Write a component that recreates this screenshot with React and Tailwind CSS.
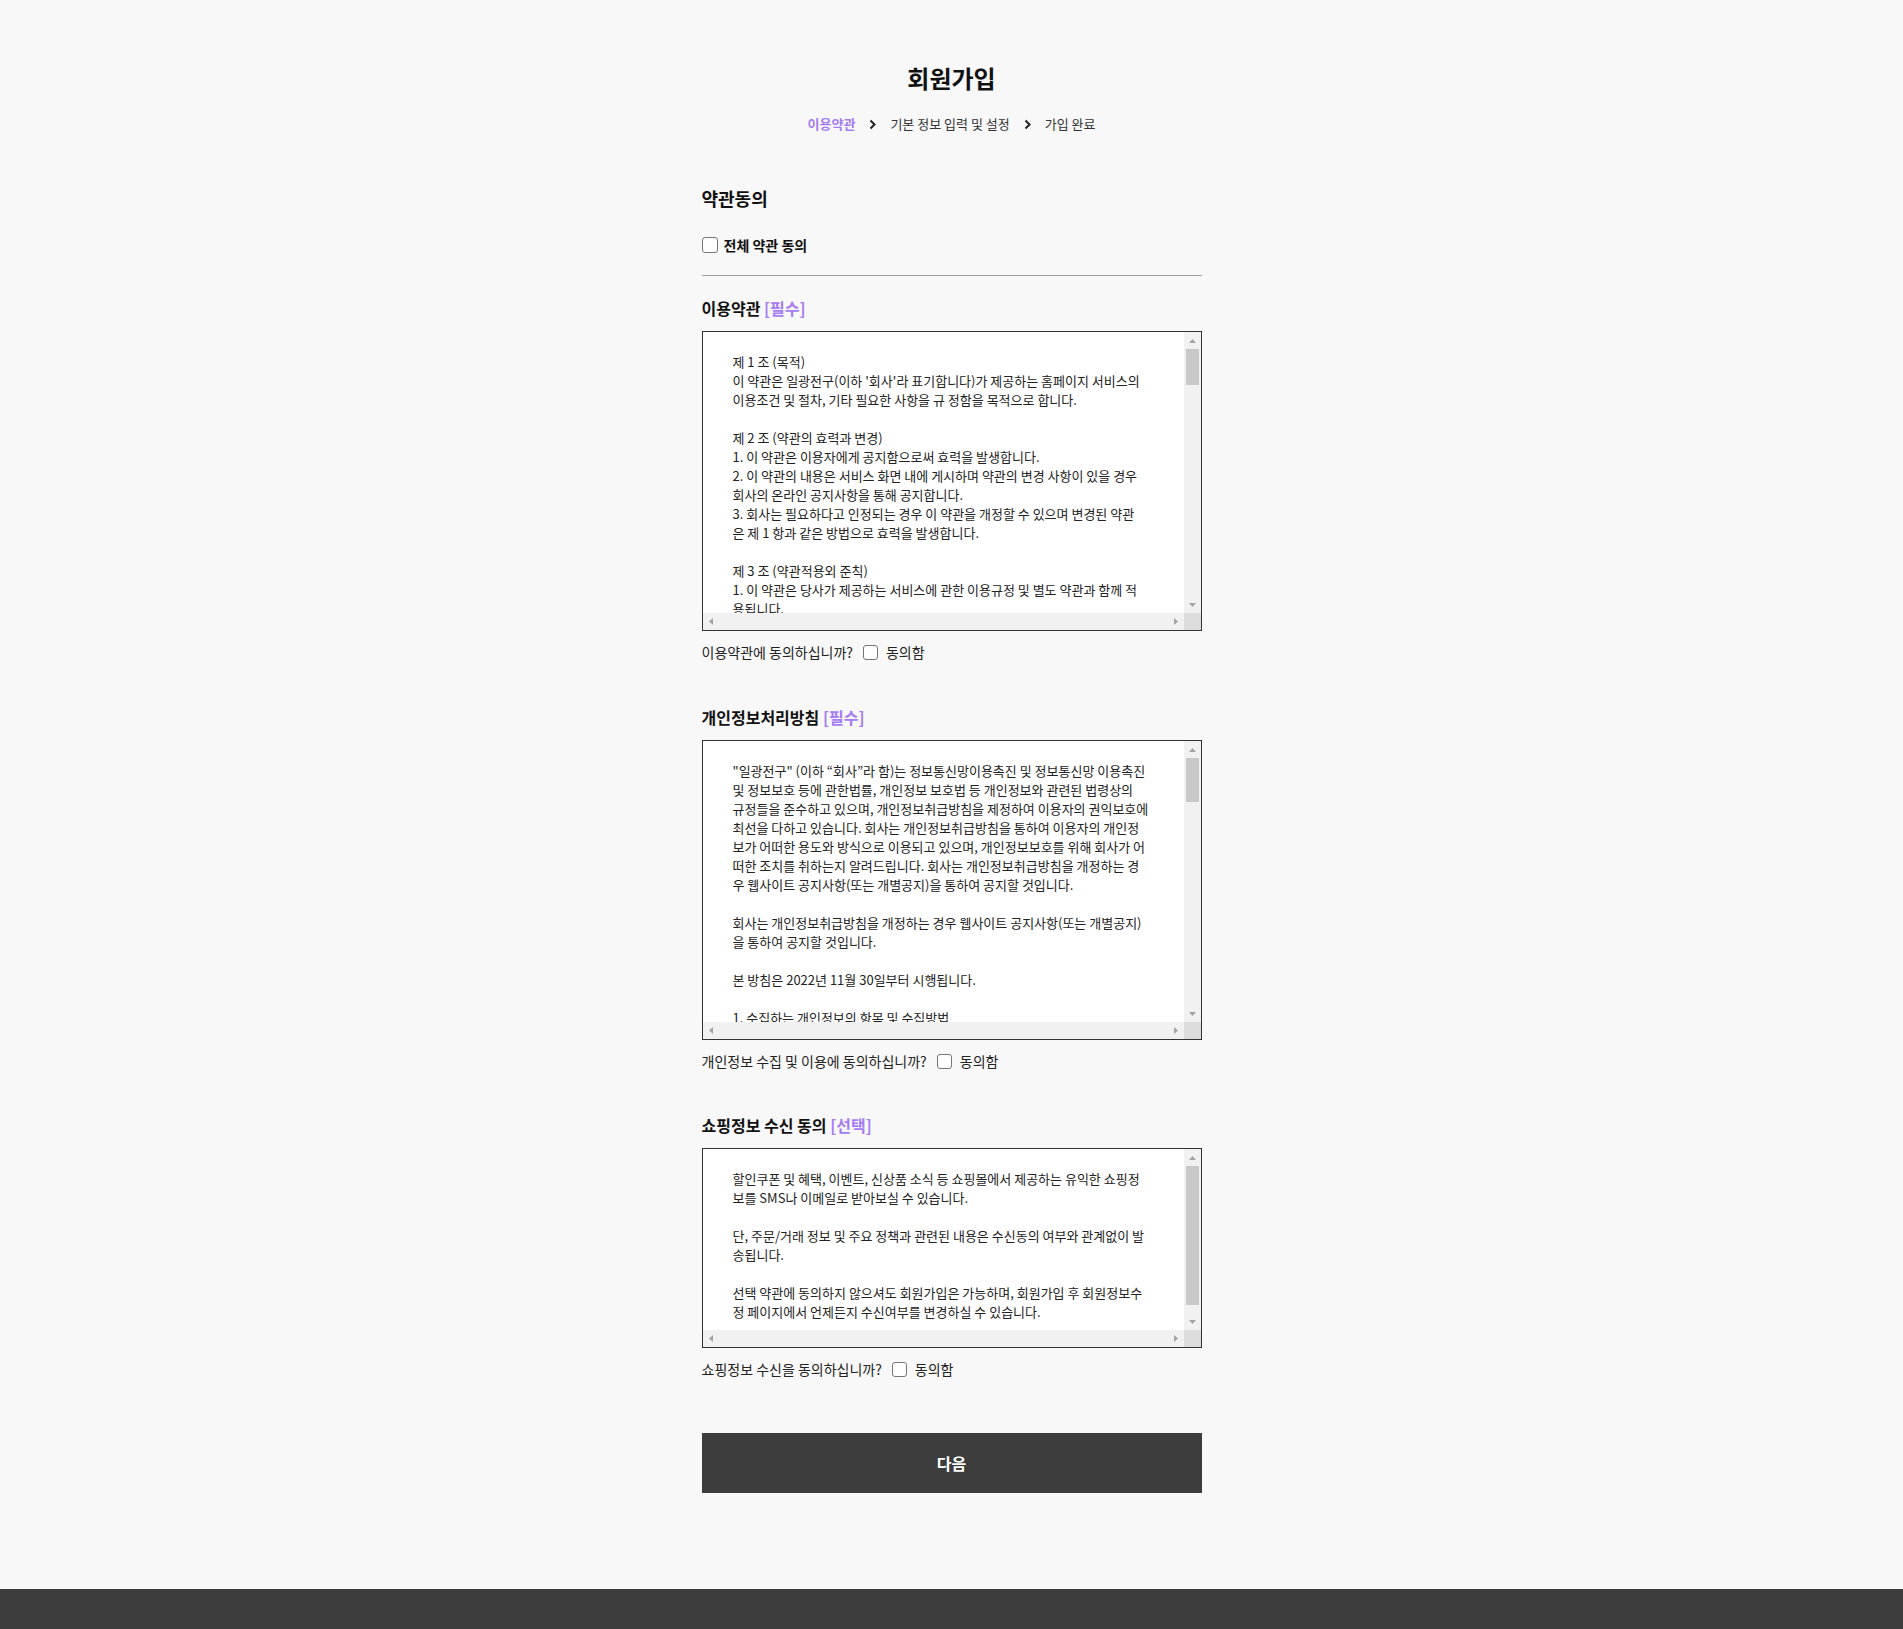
import { useState, useRef, useEffect } from "react";

const TERMS = `제 1 조 (목적)
이 약관은 일광전구(이하 '회사'라 표기합니다)가 제공하는 홈페이지 서비스의
이용조건 및 절차, 기타 필요한 사항을 규 정함을 목적으로 합니다.

제 2 조 (약관의 효력과 변경)
1. 이 약관은 이용자에게 공지함으로써 효력을 발생합니다.
2. 이 약관의 내용은 서비스 화면 내에 게시하며 약관의 변경 사항이 있을 경우
회사의 온라인 공지사항을 통해 공지합니다.
3. 회사는 필요하다고 인정되는 경우 이 약관을 개정할 수 있으며 변경된 약관
은 제 1 항과 같은 방법으로 효력을 발생합니다.

제 3 조 (약관적용외 준칙)
1. 이 약관은 당사가 제공하는 서비스에 관한 이용규정 및 별도 약관과 함께 적
용됩니다.
2. 이 약관에 명시되지 않은 사항은 관계법령 및 서비스별 안내의 규정에 따릅
니다.

제 4 조 (용어의 정의)
1. 이용자 : 회사와 서비스 이용계약을 체결한 자를 말합니다.
2. 아이디(ID) : 이용자의 식별과 서비스 이용을 위하여 이용자가 선정하고 회
사가 승인하는 문자와 숫자의 조합을 말합니다.
3. 비밀번호 : 이용자의 비밀을 보호하기 위해 이용자 자신이 설정한 문자와 숫
자의 조합을 말합니다.
4. 해지 : 회사 또는 이용자가 서비스 이용계약을 종료하는 것을 말합니다.

제 5 조 (이용계약의 성립)
1. 이용계약은 이용자의 이용신청에 대한 회사의 승낙과 이용자의 약관 내용에
대한 동의로 성립됩니다.
2. 회원에 가입하여 서비스를 이용하고자 하는 희망자는 회사에서 요청하는 개
인 신상정보를 제공해야 합니다.

제 6 조 (이용신청의 승낙)
1. 회사는 이용자의 이용신청에 대하여 서비스 이용을 승낙합니다.
2. 회사는 다음 각 호에 해당하는 신청에 대하여는 승낙을 하지 않을 수 있습니
다.
가. 타인 명의의 신청
나. 허위의 정보를 기재하거나 회사가 제시하는 내용을 기재하지 않은 경우
다. 기타 회사가 정한 이용신청 요건이 미비 되었을 때

제 7 조 (계약사항의 변경)
이용자는 개인정보관리를 통해 언제든지 자신의 정보를 열람하고 수정할 수 있
습니다.

제 8 조 (회사의 의무)
1. 회사는 특별한 사정이 없는 한 이용자가 신청한 서비스 제공 개시일에 서비
스를 이용할 수 있도록 합니다.
2. 회사는 이용자의 개인정보를 본인의 승낙 없이 타인에게 누설, 배포하지 않
습니다.
3. 회사는 이용자로부터 제기되는 의견이나 불만이 정당하다고 인정할 경우에
는 즉시 처리하여야 합니다.

제 9 조 (이용자의 의무)
1. 아이디와 비밀번호에 관한 모든 관리의 책임은 이용자에게 있습니다.
2. 이용자는 이 약관 및 관계법령에서 규정한 사항을 준수하여야 합니다.
3. 이용자는 서비스를 이용하여 얻은 정보를 회사의 사전 승낙 없이 복사, 복제,
변경, 번역, 출판, 방송 기타의 방법으로 사용하거나 이를 타인에게 제공할 수
없습니다.

제 10 조 (서비스 이용시간)
서비스의 이용은 회사의 업무상 또는 기술상 특별한 지장이 없는 한 연중무휴,
1일 24시간을 원칙으로 합니다.

제 11 조 (서비스 이용의 제한 및 중지)
1. 회사는 다음 각 호에 해당하는 경우 서비스 이용을 제한하거나 중지할 수 있
습니다.
가. 서비스용 설비의 보수 등 공사로 인한 부득이한 경우
나. 전기통신사업법에 규정된 기간통신사업자가 전기통신 서비스를 중지했을
경우
다. 기타 불가항력적 사유가 있는 경우
2. 회사는 서비스 이용을 제한하거나 정지하는 때에는 그 사유 및 제한기간 등
을 지체없이 이용자에게 알려야 합니다.

제 12 조 (계약해지 및 이용제한)
1. 이용자가 이용계약을 해지하고자 하는 때에는 이용자 본인이 온라인을 통하
여 회사에 해지신청을 하여야 합니다.
2. 회사는 이용자가 다음 각 호에 해당하는 행위를 하였을 경우 사전통지 없이
이용계약을 해지하거나 기간을 정하여 서비스 이용을 중지할 수 있습니다.
가. 타인의 서비스 아이디 및 비밀번호를 도용한 경우
나. 서비스 운영을 고의로 방해한 경우
다. 공공질서 및 미풍양속에 저해되는 내용을 유포시킨 경우
라. 기타 관련법령이나 회사가 정한 이용조건에 위배되는 경우

제 13 조 (손해배상)
회사는 무료로 제공되는 서비스와 관련하여 이용자에게 어떠한 손해가 발생하
더라도 회사가 고의로 행한 범죄행위를 제외하고 이에 대하여 책임을 부담하지
아니합니다.

제 14 조 (면책조항)
1. 회사는 천재지변 또는 이에 준하는 불가항력으로 인하여 서비스를 제공할 수
없는 경우에는 서비스 제공에 관한 책임이 면제됩니다.
2. 회사는 이용자의 귀책사유로 인한 서비스 이용의 장애에 대하여 책임을 지지
않습니다.

제 15 조 (관할법원)
서비스 이용으로 발생한 분쟁에 대해 소송이 제기될 경우 회사의 본사 소재지를
관할하는 법원을 전속 관할법원으로 합니다.

부칙
이 약관은 2022년 11월 30일부터 시행합니다.`;

const PRIVACY = `"일광전구" (이하 “회사”라 함)는 정보통신망이용촉진 및 정보통신망 이용촉진
및 정보보호 등에 관한법률, 개인정보 보호법 등 개인정보와 관련된 법령상의
규정들을 준수하고 있으며, 개인정보취급방침을 제정하여 이용자의 권익보호에
최선을 다하고 있습니다. 회사는 개인정보취급방침을 통하여 이용자의 개인정
보가 어떠한 용도와 방식으로 이용되고 있으며, 개인정보보호를 위해 회사가 어
떠한 조치를 취하는지 알려드립니다. 회사는 개인정보취급방침을 개정하는 경
우 웹사이트 공지사항(또는 개별공지)을 통하여 공지할 것입니다.

회사는 개인정보취급방침을 개정하는 경우 웹사이트 공지사항(또는 개별공지)
을 통하여 공지할 것입니다.

본 방침은 2022년 11월 30일부터 시행됩니다.

1. 수집하는 개인정보의 항목 및 수집방법
가. 수집하는 개인정보의 항목
회사는 회원가입, 상담, 서비스 신청 등을 위해 아래와 같은 개인정보를 수집하
고 있습니다.
- 필수항목 : 이름, 아이디, 비밀번호, 휴대전화번호, 이메일, 주소
- 선택항목 : 생년월일, 성별
- 서비스 이용과정에서 접속 로그, 쿠키, 접속 IP 정보가 생성되어 수집될 수
있습니다.
나. 개인정보 수집방법
홈페이지(회원가입), 게시판, 이메일, 전화 등을 통하여 수집합니다.

2. 개인정보의 수집 및 이용목적
회사는 수집한 개인정보를 다음의 목적을 위해 활용합니다.
- 회원 관리 : 회원제 서비스 이용에 따른 본인확인, 개인 식별, 불량회원의 부정
이용 방지, 가입 의사 확인, 연령확인, 불만처리 등 민원처리, 고지사항 전달
- 서비스 제공 : 물품배송, 청구서 발송, 콘텐츠 제공, 구매 및 요금 결제
- 마케팅 및 광고 활용 : 신규 서비스 개발, 이벤트 등 광고성 정보 전달

3. 개인정보의 보유 및 이용기간
원칙적으로 개인정보 수집 및 이용목적이 달성된 후에는 해당 정보를 지체 없
이 파기합니다. 단, 관계법령의 규정에 의하여 보존할 필요가 있는 경우 회사는
관계법령에서 정한 일정한 기간 동안 회원정보를 보관합니다.
- 계약 또는 청약철회 등에 관한 기록 : 5년
- 대금결제 및 재화 등의 공급에 관한 기록 : 5년
- 소비자의 불만 또는 분쟁처리에 관한 기록 : 3년
- 웹사이트 방문기록 : 3개월

4. 개인정보의 파기절차 및 방법
회사는 원칙적으로 개인정보 수집 및 이용목적이 달성된 후에는 해당 정보를
지체없이 파기합니다. 파기절차 및 방법은 다음과 같습니다.
가. 파기절차
회원님이 회원가입 등을 위해 입력하신 정보는 목적이 달성된 후 별도의 DB로
옮겨져 내부 방침 및 기타 관련 법령에 의한 정보보호 사유에 따라 일정 기간
저장된 후 파기됩니다.
나. 파기방법
전자적 파일형태로 저장된 개인정보는 기록을 재생할 수 없는 기술적 방법을
사용하여 삭제합니다.
종이에 출력된 개인정보는 분쇄기로 분쇄하거나 소각을 통하여 파기합니다.

5. 개인정보 제공
회사는 이용자의 개인정보를 원칙적으로 외부에 제공하지 않습니다. 다만, 이
용자들이 사전에 동의한 경우나 법령의 규정에 의거한 경우는 예외로 합니다.

6. 수집한 개인정보의 위탁
회사는 서비스 향상을 위해서 아래와 같이 개인정보를 위탁하고 있으며, 관계
법령에 따라 위탁계약 시 개인정보가 안전하게 관리될 수 있도록 필요한 사항
을 규정하고 있습니다.
- 택배사 : 상품 배송
- 결제대행사 : 결제 처리 및 본인인증

7. 이용자 및 법정대리인의 권리와 그 행사방법
이용자 및 법정 대리인은 언제든지 등록되어 있는 자신의 개인정보를 조회하거
나 수정할 수 있으며 가입해지를 요청할 수도 있습니다.
개인정보 조회, 수정을 위해서는 '개인정보변경'(또는 '회원정보수정' 등)을, 가
입해지(동의철회)를 위해서는 '회원탈퇴'를 클릭하여 본인 확인 절차를 거치신
후 직접 열람, 정정 또는 탈퇴가 가능합니다.

8. 개인정보 자동수집 장치의 설치, 운영 및 그 거부에 관한 사항
회사는 귀하의 정보를 수시로 저장하고 찾아내는 '쿠키(cookie)' 등을 운용합
니다. 쿠키란 웹사이트를 운영하는데 이용되는 서버가 귀하의 브라우저에 보내
는 아주 작은 텍스트 파일로서 귀하의 컴퓨터 하드디스크에 저장됩니다.

9. 개인정보에 관한 민원서비스
회사는 고객의 개인정보를 보호하고 개인정보와 관련한 불만을 처리하기 위하
여 아래와 같이 관련 부서 및 개인정보관리책임자를 지정하고 있습니다.
귀하께서는 회사의 서비스를 이용하시며 발생하는 모든 개인정보보호 관련 민
원을 개인정보관리책임자 혹은 담당부서로 신고하실 수 있습니다.`;

const SHOPPING = `할인쿠폰 및 혜택, 이벤트, 신상품 소식 등 쇼핑몰에서 제공하는 유익한 쇼핑정
보를 SMS나 이메일로 받아보실 수 있습니다.

단, 주문/거래 정보 및 주요 정책과 관련된 내용은 수신동의 여부와 관계없이 발
송됩니다.

선택 약관에 동의하지 않으셔도 회원가입은 가능하며, 회원가입 후 회원정보수
정 페이지에서 언제든지 수신여부를 변경하실 수 있습니다.`;

const PURPLE = "text-[#a57cf4]";

const Chevron = () => (
  <svg width="7" height="11" viewBox="0 0 7 11" className="mx-[14px]">
    <polyline points="1.5,1.5 5.5,5.5 1.5,9.5" fill="none" stroke="#222" strokeWidth="2" />
  </svg>
);

const Arrow = ({ dir }) => {
  const pts = {
    up: "0,4 3.5,0 7,4",
    down: "0,0 3.5,4 7,0",
    left: "4,0 0,3.5 4,7",
    right: "0,0 4,3.5 0,7",
  }[dir];
  const v = dir === "up" || dir === "down";
  return (
    <svg width={v ? 7 : 4} height={v ? 4 : 7} viewBox={v ? "0 0 7 4" : "0 0 4 7"}>
      <polygon points={pts} fill="#a3a3a3" />
    </svg>
  );
};

const Box = ({ checked, onChange, size }) => (
  <input
    type="checkbox"
    checked={checked}
    onChange={onChange}
    className={`appearance-none ${size} shrink-0 rounded-[3px] border border-[#767676] bg-white checked:border-[#a57cf4] checked:bg-[#a57cf4]`}
  />
);

const ScrollBox = ({ text, height }) => {
  const ref = useRef(null);
  const [bar, setBar] = useState({ top: 0, size: 30 });

  const update = () => {
    const el = ref.current;
    if (!el) return;
    const track = el.clientHeight - 34;
    const size = Math.max(Math.round((track * el.clientHeight) / el.scrollHeight), 17);
    const max = el.scrollHeight - el.clientHeight;
    const top = max > 0 ? (el.scrollTop / max) * (track - size) : 0;
    setBar({ top, size });
  };

  useEffect(update, [text]);

  return (
    <div className={`mt-[11px] flex ${height} flex-col border border-[#333] bg-white`}>
      <div className="flex min-h-0 flex-1">
        <textarea
          ref={ref}
          readOnly
          wrap="off"
          value={text}
          onScroll={update}
          className="min-w-0 flex-1 resize-none overflow-y-auto overflow-x-hidden bg-white px-[30px] py-[20px] text-[13px] leading-[19px] text-[#222] outline-none [scrollbar-width:none]"
        />
        <div className="flex w-[17px] flex-col bg-[#f1f1f1]">
          <div className="flex h-[17px] items-center justify-center">
            <Arrow dir="up" />
          </div>
          <div className="flex-1 px-[2px]">
            <div className="w-full bg-[#c8c8c8]" style={{ height: bar.size, marginTop: bar.top }} />
          </div>
          <div className="flex h-[17px] items-center justify-center">
            <Arrow dir="down" />
          </div>
        </div>
      </div>
      <div className="flex h-[17px]">
        <div className="flex flex-1 items-center justify-between bg-[#f1f1f1] px-[6px]">
          <Arrow dir="left" />
          <Arrow dir="right" />
        </div>
        <div className="w-[17px] bg-[#dcdcdc]" />
      </div>
    </div>
  );
};

const Section = ({ title, tag, text, height, question, checked, onToggle, gap }) => (
  <div className={gap}>
    <h3 className="text-[16px] font-bold leading-[24px] text-[#111]">
      {title} <span className={PURPLE}>[{tag}]</span>
    </h3>
    <ScrollBox text={text} height={height} />
    <label className="mt-[11px] flex h-[20px] items-center text-[14px] leading-[20px] text-[#222]">
      <span>{question}</span>
      <span className="ml-[10px] flex">
        <Box checked={checked} onChange={onToggle} size="w-[15px] h-[15px]" />
      </span>
      <span className="ml-[8px]">동의함</span>
    </label>
  </div>
);

export default function App() {
  const [agree, setAgree] = useState({ terms: false, privacy: false, shopping: false });
  const all = agree.terms && agree.privacy && agree.shopping;

  const toggle = (key) => setAgree({ ...agree, [key]: !agree[key] });
  const toggleAll = () => setAgree({ terms: !all, privacy: !all, shopping: !all });

  return (
    <div className="flex min-h-screen flex-col bg-[#f8f8f8] font-['Noto_Sans_CJK_KR','Noto_Sans',sans-serif] text-[#111]">
      <main className="mx-auto w-[500px] pt-[60px] pb-[93px]">
        <h1 className="text-center text-[24px] font-bold leading-[36px] text-[#111]">회원가입</h1>
        <div className="mt-[18px] flex items-center justify-center text-[13px] leading-[20px] text-[#333]">
          <span className={`font-bold ${PURPLE}`}>이용약관</span>
          <Chevron />
          <span>기본 정보 입력 및 설정</span>
          <Chevron />
          <span>가입 완료</span>
        </div>

        <h2 className="mt-[51px] text-[18px] font-bold leading-[27px]">약관동의</h2>
        <label className="mt-[23px] flex h-[20px] items-center text-[14px] font-bold">
          <Box checked={all} onChange={toggleAll} size="w-[16px] h-[16px]" />
          <span className="ml-[6px]">전체 약관 동의</span>
        </label>
        <div className="mt-[20px] border-t border-[#a0a0a0]" />

        <Section
          gap="mt-[20px]"
          title="이용약관"
          tag="필수"
          text={TERMS}
          height="h-[300px]"
          question="이용약관에 동의하십니까?"
          checked={agree.terms}
          onToggle={() => toggle("terms")}
        />
        <Section
          gap="mt-[43px]"
          title="개인정보처리방침"
          tag="필수"
          text={PRIVACY}
          height="h-[300px]"
          question="개인정보 수집 및 이용에 동의하십니까?"
          checked={agree.privacy}
          onToggle={() => toggle("privacy")}
        />
        <Section
          gap="mt-[42px]"
          title="쇼핑정보 수신 동의"
          tag="선택"
          text={SHOPPING}
          height="h-[200px]"
          question="쇼핑정보 수신을 동의하십니까?"
          checked={agree.shopping}
          onToggle={() => toggle("shopping")}
        />

        <button
          type="button"
          className="mt-[54px] block h-[60px] w-full bg-[#3d3d3d] text-[16px] font-bold text-white"
        >
          다음
        </button>
      </main>
      <footer className="mt-auto h-[40px] bg-[#3d3d3d]" />
    </div>
  );
}
